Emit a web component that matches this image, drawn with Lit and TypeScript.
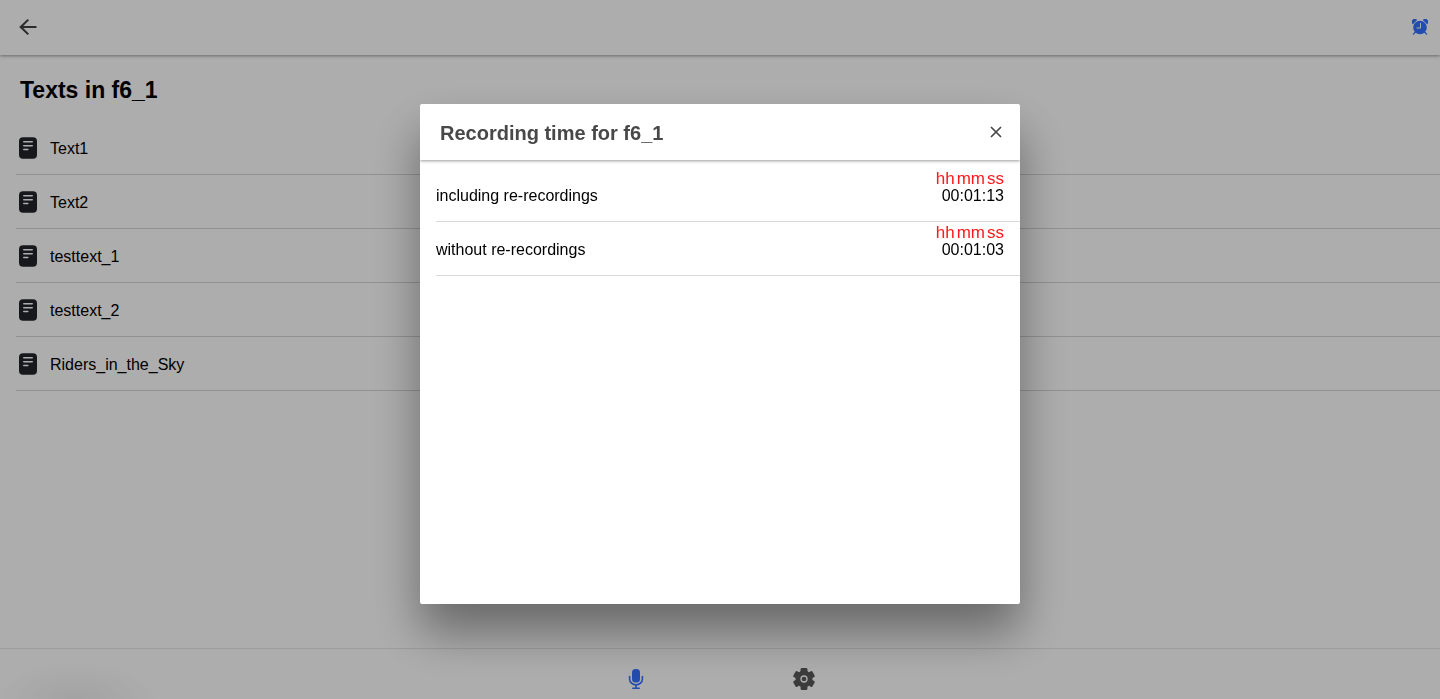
import { LitElement, html, css } from "lit";
import { customElement, state } from "lit/decorators.js";

@customElement("app-root")
export class AppRoot extends LitElement {
  static styles = css`
    :host {
      display: block;
      font-family: "Liberation Sans", Arial, sans-serif;
      font-size: 16px;
      color: #000;
    }
    * {
      box-sizing: border-box;
    }
    button {
      display: flex;
      align-items: center;
      justify-content: center;
      padding: 0;
      border: 0;
      background: none;
      color: inherit;
      cursor: pointer;
    }
    svg {
      display: block;
      fill: currentColor;
    }
    ul,
    dl,
    dd,
    h1,
    h2 {
      margin: 0;
      padding: 0;
    }
    .page {
      display: flex;
      flex-direction: column;
      height: 100vh;
      background: #fff;
    }
    .toolbar {
      display: flex;
      align-items: center;
      justify-content: space-between;
      height: 55px;
      flex: none;
      padding: 0 12px 2px 16px;
      color: #424242;
      box-shadow: 0 1px 3px rgba(0, 0, 0, 0.4);
    }
    .alarm {
      color: #3371ff;
    }
    .content {
      flex: 1;
      min-height: 0;
      overflow: hidden;
      padding-top: 20px;
    }
    .heading {
      padding: 0 20px;
      font-size: 23px;
      line-height: 30px;
    }
    .list {
      list-style: none;
      padding: 16px 0 0 16px;
    }
    .item {
      height: 54px;
      border-bottom: 1px solid #d6d6d6;
    }
    .link {
      display: flex;
      align-items: center;
      gap: 10px;
      height: 100%;
      color: inherit;
      text-decoration: none;
    }
    .label {
      padding-top: 2px;
    }
    .doc {
      color: #222428;
    }
    .tabs {
      display: flex;
      justify-content: center;
      flex: none;
      height: 51px;
      border-top: 1px solid #e6e6e6;
      background: radial-gradient(ellipse 80px 36px at 76px 100%, #f0f0f0, #fff);
    }
    .tab {
      width: 168px;
      height: 60px;
      color: #595959;
    }
    .tab.active {
      color: #3371ff;
    }
    .overlay {
      position: fixed;
      inset: 0;
      display: flex;
      align-items: center;
      justify-content: center;
      padding-top: 9px;
      background: rgba(0, 0, 0, 0.32);
    }
    .modal {
      width: 600px;
      height: 500px;
      max-width: 100%;
      max-height: 100%;
      overflow: hidden;
      border-radius: 2px;
      background: #fff;
      box-shadow: 0 28px 48px rgba(0, 0, 0, 0.4);
    }
    .modal-header {
      display: flex;
      align-items: center;
      justify-content: space-between;
      height: 56px;
      padding: 0 12px 0 20px;
      color: #484848;
      box-shadow: 0 1px 3px rgba(0, 0, 0, 0.4);
    }
    .modal-title {
      padding-top: 2px;
      font-size: 20px;
      font-weight: 700;
      line-height: 24px;
    }
    .times {
      padding: 8px 0 0 16px;
    }
    .row {
      display: flex;
      align-items: center;
      justify-content: space-between;
      height: 54px;
      padding-right: 16px;
      border-bottom: 1px solid #dadada;
    }
    .time {
      align-self: flex-start;
      display: flex;
      flex-direction: column;
      align-items: flex-end;
      padding-top: 2px;
      line-height: 17px;
    }
    .units {
      display: flex;
      gap: 2px;
      font-size: 17px;
      color: #ff1a1a;
    }
  `;

  @state() private open = true;

  private texts = ["Text1", "Text2", "testtext_1", "testtext_2", "Riders_in_the_Sky"];

  private times = [
    { label: "including re-recordings", value: "00:01:13" },
    { label: "without re-recordings", value: "00:01:03" },
  ];

  private docIcon() {
    return html`<svg class="doc" width="24" height="24" viewBox="0 0 24 24" aria-hidden="true">
      <path
        fill-rule="evenodd"
        d="M7 1.300h10a4 4 0 0 1 4 4v13.400a4 4 0 0 1-4 4H7a4 4 0 0 1-4-4V5.300a4 4 0 0 1 4-4ZM7.800 5a.8.8 0 0 0 0 1.600h8.400a.8.8 0 0 0 0-1.600ZM7.800 8.900a.8.8 0 0 0 0 1.600h8.400a.8.8 0 0 0 0-1.600ZM7.800 12.700a.8.8 0 0 0 0 1.600h4a.8.8 0 0 0 0-1.600Z"
      />
    </svg>`;
  }

  private modal() {
    return html`<div class="overlay">
      <section class="modal" role="dialog" aria-modal="true" aria-labelledby="modal-title">
        <header class="modal-header">
          <h2 class="modal-title" id="modal-title">Recording time for f6_1</h2>
          <button aria-label="Close" @click=${() => (this.open = false)}>
            <svg width="24" height="24" viewBox="0 0 24 24">
              <path d="M7 7l10 10M17 7L7 17" fill="none" stroke="currentColor" stroke-width="1.700" />
            </svg>
          </button>
        </header>
        <dl class="times">
          ${this.times.map(
            (t) => html`<div class="row">
              <dt class="label">${t.label}</dt>
              <dd class="time">
                <span class="units"><span>hh</span><span>mm</span><span>ss</span></span>
                <span>${t.value}</span>
              </dd>
            </div>`
          )}
        </dl>
      </section>
    </div>`;
  }

  render() {
    return html`<div class="page">
        <header class="toolbar">
          <button aria-label="Back">
            <svg width="24" height="24" viewBox="0 0 24 24">
              <path d="M20.500 11H7.300l5.700-5.700L11.600 3.900 3.200 12l8.400 8.100 1.400-1.400L7.300 13h13.200z" />
            </svg>
          </button>
          <button class="alarm" aria-label="Recording time" @click=${() => (this.open = true)}>
            <svg width="16" height="16" viewBox="0 0 16 16">
              <path
                d="M.8 4.800A2.700 2.700 0 0 1 4.700 1ZM15.200 4.800A2.700 2.700 0 0 0 11.300 1Z"
                stroke="currentColor"
                stroke-width="1"
                stroke-linejoin="round"
              />
              <circle cx="8" cy="8.500" r="6.800" />
              <path d="M3.200 13.200l-1.700 1.900M12.800 13.200l1.700 1.900" stroke="currentColor" stroke-width="1.300" stroke-linecap="round" />
              <path d="M8.500 4v5H4.500" fill="none" stroke="#fff" stroke-width="1" />
            </svg>
          </button>
        </header>
        <main class="content">
          <h1 class="heading">Texts in f6_1</h1>
          <ul class="list">
            ${this.texts.map(
              (t) => html`<li class="item">
                <a class="link" href="#${t}">${this.docIcon()}<span class="label">${t}</span></a>
              </li>`
            )}
          </ul>
        </main>
        <nav class="tabs">
          <button class="tab active" aria-label="Record">
            <svg width="24" height="24" viewBox="0 0 24 24">
              <rect x="8" y="2" width="8" height="13.500" rx="3.500" />
              <path
                d="M5.600 9.500v2.500a6.400 5.800 0 0 0 12.800 0V9.500M12 18v3M8.800 21.300h6.400"
                fill="none"
                stroke="currentColor"
                stroke-width="1.600"
                stroke-linecap="round"
              />
            </svg>
          </button>
          <button class="tab" aria-label="Settings">
            <svg width="24" height="24" viewBox="0 0 24 24">
              <rect x="8.600" y="1" width="6.800" height="22" rx="1.200" />
              <rect x="8.600" y="1" width="6.800" height="22" rx="1.200" transform="rotate(60 12 12)" />
              <rect x="8.600" y="1" width="6.800" height="22" rx="1.200" transform="rotate(120 12 12)" />
              <circle cx="12" cy="12" r="8.500" />
              <circle cx="12" cy="12" r="3" fill="none" stroke="#fff" stroke-width="1.300" />
            </svg>
          </button>
        </nav>
      </div>
      ${this.open ? this.modal() : null}`;
  }
}
